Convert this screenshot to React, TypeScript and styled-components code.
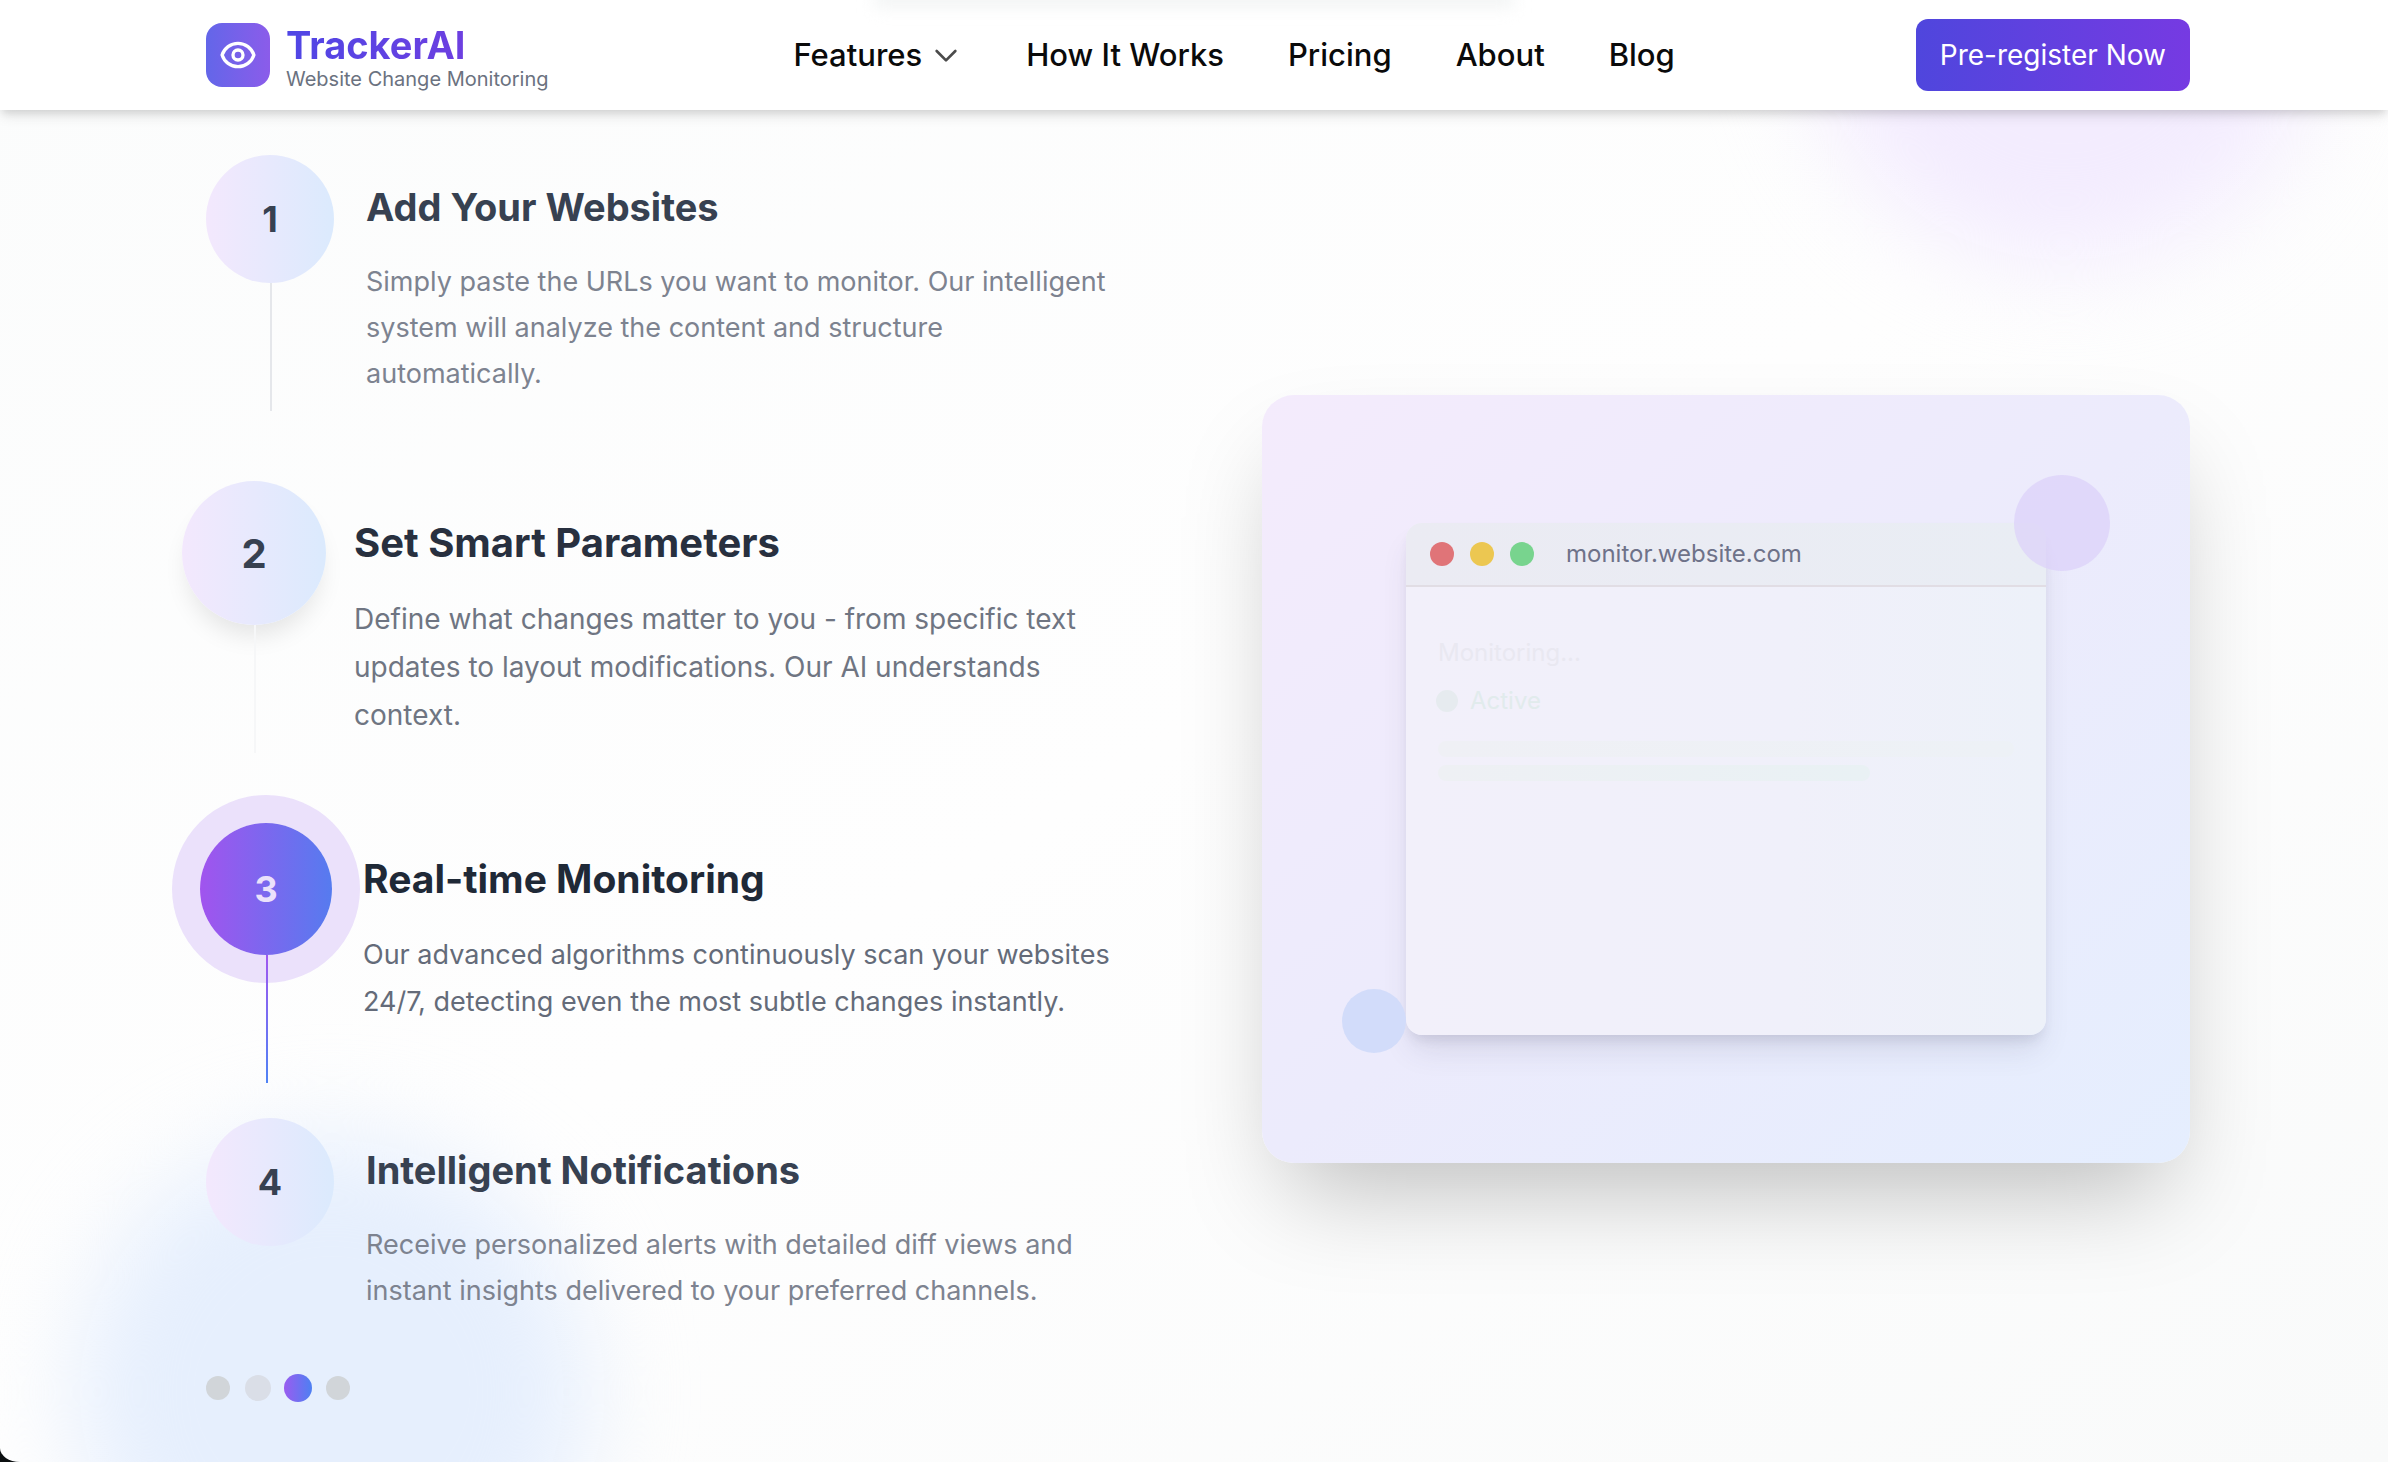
import React from "react";
import styled, { createGlobalStyle, css } from "styled-components";

const GlobalStyle = createGlobalStyle`
  *, *::before, *::after { box-sizing: border-box; }
  html, body { margin: 0; background: #0b0f10; }
  body {
    font-family: Inter, "Liberation Sans", sans-serif;
    color: #000;
  }
  h3, p { margin: 0; }
`;

const Page = styled.div`
  position: relative;
  min-height: 100vh;
  overflow: hidden;
  border-bottom-left-radius: 20px 14px;
  background: linear-gradient(to bottom right, #fbfcfc, #fefefe 50%, #f9fafa);
`;

const Orb = styled.div<{ $color: string }>`
  position: absolute;
  width: 512px;
  height: 512px;
  border-radius: 50%;
  filter: blur(48px);
  background: ${(p) => p.$color};
`;

const TopOrb = styled(Orb)`
  top: -248px;
  right: 68px;
`;

const BottomOrb = styled(Orb)`
  bottom: -186px;
  left: 76px;
`;

const Header = styled.header`
  position: relative;
  z-index: 2;
  height: 110px;
  padding: 0 198px 0 206px;
  display: flex;
  align-items: center;
  justify-content: space-between;
  background: #fff;
  box-shadow: 0 8px 12px -2px rgba(0, 0, 0, 0.1), 0 4px 8px -2px rgba(0, 0, 0, 0.1);

  &::before {
    content: "";
    position: absolute;
    top: -12px;
    left: 50%;
    width: 640px;
    height: 20px;
    transform: translateX(-50%);
    background: #f3f5f5;
    filter: blur(8px);
  }
`;

const Brand = styled.a`
  display: flex;
  align-items: center;
  gap: 16px;
  padding-right: 4px;
  text-decoration: none;
`;

const BrandMark = styled.span`
  display: grid;
  place-items: center;
  width: 64px;
  height: 64px;
  border-radius: 16px;
  color: #fff;
  background: linear-gradient(to right, #6366e9, #8b5cea);
`;

const BrandText = styled.span`
  display: flex;
  flex-direction: column;
  padding-top: 4px;
`;

const BrandName = styled.span`
  align-self: flex-start;
  font-size: 38px;
  font-weight: 700;
  line-height: 44px;
  color: transparent;
  background: linear-gradient(to right, #4f46e5, #6d3fe0);
  background-clip: text;
`;

const BrandTagline = styled.span`
  font-size: 20px;
  line-height: 24px;
  color: #6b7280;
`;

const Nav = styled.nav`
  display: flex;
  align-items: center;
  gap: 64px;
`;

const navItem = css`
  font: inherit;
  font-size: 31px;
  font-weight: 500;
  line-height: 48px;
  color: #0a0a0a;
`;

const NavLink = styled.a`
  ${navItem}
  text-decoration: none;
`;

const NavButton = styled.button`
  ${navItem}
  display: flex;
  align-items: center;
  gap: 8px;
  padding: 0;
  border: 0;
  background: none;

  svg { color: #4b4b4b; }
`;

const CallToAction = styled.button`
  height: 72px;
  padding: 0 24px;
  border: 0;
  border-radius: 12px;
  font: inherit;
  font-size: 28px;
  font-weight: 400;
  color: #fff;
  background: linear-gradient(to right, #4f46dd, #763ae2);
`;

const Main = styled.main`
  position: relative;
  padding: 45px 198px 58px 206px;
  display: grid;
  grid-template-columns: 1fr 1fr;
  gap: 128px;
  align-items: center;
`;

const Steps = styled.ol`
  list-style: none;
  margin: 0;
  padding: 0;
  display: flex;
  flex-direction: column;
  gap: 84px;
`;

type Tone = "idle" | "leaving" | "active";

const tones = {
  idle: {
    shift: 0, gap: 32, circle: 128, digit: 36, top: 24, bottom: 0,
    title: 38, text: 27, line: 46, titleColor: "#374151", textColor: "#7d8390",
  },
  leaving: {
    shift: -24, gap: 28, circle: 144, digit: 40, top: 34, bottom: 0,
    title: 40, text: 28, line: 48, titleColor: "#28303f", textColor: "#6f7582",
  },
  active: {
    shift: -6, gap: 31, circle: 132, digit: 36, top: 28, bottom: 9,
    title: 39, text: 27, line: 47, titleColor: "#1f2937", textColor: "#646b79",
  },
};

const StepItem = styled.li<{ $tone: Tone }>`
  display: flex;
  align-items: flex-start;
  gap: ${(p) => tones[p.$tone].gap}px;
  margin-left: ${(p) => tones[p.$tone].shift}px;
`;

const Marker = styled.div<{ $tone: Tone }>`
  position: relative;
  flex: none;
  display: grid;
  place-items: center;
  width: ${(p) => tones[p.$tone].circle}px;
  height: ${(p) => tones[p.$tone].circle}px;
  border-radius: 50%;
  font-size: ${(p) => tones[p.$tone].digit}px;
  font-weight: 700;
  color: #374151;
  background: linear-gradient(to right, #f3e8fd, #dbeafd);

  ${(p) =>
    p.$tone === "leaving" &&
    css`
      box-shadow: 0 16px 24px -6px rgba(0, 0, 0, 0.1);
    `}

  ${(p) =>
    p.$tone === "active" &&
    css`
      color: #ebe1fb;
      background: linear-gradient(to right, #a154ee, #567bef);
      box-shadow: 0 0 0 28px #ebe1fb;
    `}
`;

const Connector = styled.span<{ $tone: Tone }>`
  position: absolute;
  top: 100%;
  left: 50%;
  width: 2px;
  height: 128px;
  background: ${(p) =>
    p.$tone === "active"
      ? "linear-gradient(to bottom, #a058f0, #4f83f5)"
      : p.$tone === "leaving"
        ? "#f6f7f8"
        : "#e5e7eb"};
`;

const StepText = styled.div<{ $tone: Tone }>`
  flex: 1;
  padding-top: ${(p) => tones[p.$tone].top}px;
  padding-right: 16px;
  padding-bottom: ${(p) => tones[p.$tone].bottom}px;
`;

const StepTitle = styled.h3<{ $tone: Tone }>`
  margin-bottom: 24px;
  font-size: ${(p) => tones[p.$tone].title}px;
  font-weight: 700;
  line-height: 56px;
  color: ${(p) => tones[p.$tone].titleColor};
`;

const StepBody = styled.p<{ $tone: Tone }>`
  font-size: ${(p) => tones[p.$tone].text}px;
  line-height: ${(p) => tones[p.$tone].line}px;
  color: ${(p) => tones[p.$tone].textColor};
`;

const Pager = styled.div`
  display: grid;
  grid-template-columns: repeat(4, 24px);
  gap: 16px;
  align-items: center;
  justify-items: center;
  height: 28px;
  margin-top: 60px;
`;

const PagerDot = styled.button<{ $tone: Tone }>`
  padding: 0;
  border: 0;
  border-radius: 50%;
  aspect-ratio: 1;
  width: ${(p) => ({ idle: 24, leaving: 26, active: 28 })[p.$tone]}px;
  background: ${(p) =>
    ({
      idle: "#d1d5d9",
      leaving: "#dadee7",
      active: "linear-gradient(to right, #9a5cf0, #4d80f2)",
    })[p.$tone]};
`;

const Stage = styled.section`
  position: relative;
  display: grid;
  place-items: center;
  height: 768px;
  border-radius: 32px;
  background: linear-gradient(to bottom right, #f4ebfc, #ecebfc 50%, #e5eefe);
  box-shadow: 0 50px 100px -24px rgba(0, 0, 0, 0.25);
`;

const Bubble = styled.span`
  position: absolute;
  border-radius: 50%;
`;

const PurpleBubble = styled(Bubble)`
  top: 80px;
  right: 80px;
  width: 96px;
  height: 96px;
  background: rgba(219, 208, 250, 0.7);
`;

const BlueBubble = styled(Bubble)`
  bottom: 110px;
  left: 80px;
  width: 64px;
  height: 64px;
  background: #d2dcfa;
`;

const Browser = styled.div`
  position: relative;
  width: 640px;
  height: 512px;
  border-radius: 16px;
  overflow: hidden;
  background: linear-gradient(to right, #f2f0fa, #f0f0fa 60%, #edf1f9);
`;

const BrowserShadow = styled.div`
  border-radius: 16px;
  box-shadow: 0 20px 30px -6px rgba(60, 60, 90, 0.13), 0 8px 12px -4px rgba(60, 60, 90, 0.12);
`;

const BrowserBar = styled.div`
  display: flex;
  align-items: center;
  gap: 16px;
  height: 64px;
  padding: 0 24px;
  background: linear-gradient(to right, #ebebf3, #e9edf4);
  border-bottom: 2px solid #e1dde4;
`;

const Light = styled.span<{ $color: string }>`
  width: 24px;
  height: 24px;
  border-radius: 50%;
  background: ${(p) => p.$color};
`;

const Address = styled.span`
  margin-left: 16px;
  font-size: 24px;
  line-height: 32px;
  color: #6e7289;
`;

const BrowserBody = styled.div`
  padding: 50px 32px;
`;

const Status = styled.p`
  font-size: 24px;
  line-height: 32px;
  color: #e9e8f1;
`;

const Active = styled.p`
  display: flex;
  align-items: center;
  gap: 12px;
  margin: 16px 0 24px -2px;
  font-size: 24px;
  line-height: 32px;
  color: #e1ebec;

  &::before {
    content: "";
    width: 22px;
    height: 22px;
    border-radius: 50%;
    background: #e6ebef;
  }
`;

const Skeleton = styled.div<{ $short?: boolean }>`
  width: ${(p) => (p.$short ? "75%" : "100%")};
  height: 16px;
  margin-bottom: 8px;
  border-radius: 8px;
  background: ${(p) =>
    p.$short
      ? "linear-gradient(to right, #eef0f4, #e9f1f4)"
      : "linear-gradient(to right, #eff0f5, #edf1f6)"};
`;

const steps: { tone: Tone; title: string; text: string }[] = [
  {
    tone: "idle",
    title: "Add Your Websites",
    text: "Simply paste the URLs you want to monitor. Our intelligent system will analyze the content and structure automatically.",
  },
  {
    tone: "leaving",
    title: "Set Smart Parameters",
    text: "Define what changes matter to you - from specific text updates to layout modifications. Our AI understands context.",
  },
  {
    tone: "active",
    title: "Real-time Monitoring",
    text: "Our advanced algorithms continuously scan your websites 24/7, detecting even the most subtle changes instantly.",
  },
  {
    tone: "idle",
    title: "Intelligent Notifications",
    text: "Receive personalized alerts with detailed diff views and instant insights delivered to your preferred channels.",
  },
];

const strokeProps = {
  viewBox: "0 0 24 24",
  fill: "none",
  stroke: "currentColor",
  strokeWidth: 2,
  strokeLinecap: "round",
  strokeLinejoin: "round",
  "aria-hidden": true,
} as const;

const EyeIcon = () => (
  <svg width="40" height="40" {...strokeProps}>
    <path d="M15 12a3 3 0 1 1-6 0 3 3 0 0 1 6 0z" />
    <path d="M2.458 12C3.732 7.943 7.523 5 12 5c4.478 0 8.268 2.943 9.542 7-1.274 4.057-5.064 7-9.542 7-4.477 0-8.268-2.943-9.542-7z" />
  </svg>
);

const ChevronIcon = () => (
  <svg width="32" height="32" {...strokeProps}>
    <path d="M19 9l-7 7-7-7" />
  </svg>
);

export default function App() {
  return (
    <>
      <GlobalStyle />
      <Page>
        <TopOrb $color="#f3ecfe" />
        <BottomOrb $color="#e6effd" />
        <Header>
          <Brand href="#">
            <BrandMark>
              <EyeIcon />
            </BrandMark>
            <BrandText>
              <BrandName>TrackerAI</BrandName>
              <BrandTagline>Website Change Monitoring</BrandTagline>
            </BrandText>
          </Brand>
          <Nav>
            <NavButton type="button">
              Features
              <ChevronIcon />
            </NavButton>
            <NavLink href="#how">How It Works</NavLink>
            <NavLink href="#pricing">Pricing</NavLink>
            <NavLink href="#about">About</NavLink>
            <NavLink href="#blog">Blog</NavLink>
          </Nav>
          <CallToAction type="button">Pre-register Now</CallToAction>
        </Header>
        <Main>
          <div>
            <Steps>
              {steps.map((step, i) => (
                <StepItem key={step.title} $tone={step.tone}>
                  <Marker $tone={step.tone}>
                    {i + 1}
                    {i < steps.length - 1 && <Connector $tone={step.tone} />}
                  </Marker>
                  <StepText $tone={step.tone}>
                    <StepTitle $tone={step.tone}>{step.title}</StepTitle>
                    <StepBody $tone={step.tone}>{step.text}</StepBody>
                  </StepText>
                </StepItem>
              ))}
            </Steps>
            <Pager>
              {steps.map((step, i) => (
                <PagerDot key={step.title} type="button" $tone={step.tone} aria-label={`Step ${i + 1}`} />
              ))}
            </Pager>
          </div>
          <Stage>
            <BlueBubble />
            <BrowserShadow>
              <Browser>
                <BrowserBar>
                  <Light $color="#e07478" />
                  <Light $color="#ecc751" />
                  <Light $color="#78d48e" />
                  <Address>monitor.website.com</Address>
                </BrowserBar>
                <BrowserBody>
                  <Status>Monitoring...</Status>
                  <Active>Active</Active>
                  <Skeleton />
                  <Skeleton $short />
                </BrowserBody>
              </Browser>
            </BrowserShadow>
            <PurpleBubble />
          </Stage>
        </Main>
      </Page>
    </>
  );
}
